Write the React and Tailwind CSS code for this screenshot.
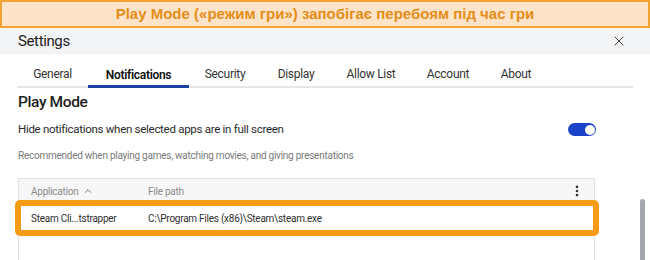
import { X, ChevronUp, EllipsisVertical } from "lucide-react";

const tabs = [
  { label: "General", w: "w-[71px]" },
  { label: "Notifications", w: "w-[101px]", active: true },
  { label: "Security", w: "w-[72px]" },
  { label: "Display", w: "w-[70px]" },
  { label: "Allow List", w: "w-[80px]" },
  { label: "Account", w: "w-[74px]" },
  { label: "About", w: "w-[62px]" },
];

const Toggle = () => (
  <div className="w-[28px] h-[13px] rounded-full bg-[#1b43c9] flex items-center justify-end pr-[1.5px]">
    <div className="w-[10px] h-[10px] rounded-full bg-white" />
  </div>
);

export default function App() {
  return (
    <div className="w-[650px] h-[260px] bg-white overflow-hidden relative font-['Roboto',sans-serif]">
      <div className="h-[28px] border-2 border-[#f0a232] bg-[#fde4c8] flex items-center justify-center">
        <span className="font-['Liberation_Sans',sans-serif] font-bold text-[15px] text-[#e58d18]">
          Play Mode («режим гри») запобігає перебоям під час гри
        </span>
      </div>

      <div className="h-[26px] bg-[#f3f4f6] flex items-center justify-between pl-[18px] pr-[23px]">
        <span className="text-[15px] text-[#222] tracking-tight">Settings</span>
        <X size={16} strokeWidth={1.4} className="text-[#333]" />
      </div>

      <div className="mx-[17px] mt-[7px] border-b-2 border-[#e6e6e6] flex h-[27px]">
        {tabs.map((t) => (
          <div
            key={t.label}
            className={`${t.w} flex items-center justify-center text-[12px] tracking-tight ${
              t.active
                ? "font-semibold text-[#111] border-b-[3px] border-[#1f3fa6] -mb-[2px] pt-[3px]"
                : "text-[#333]"
            }`}
          >
            {t.label}
          </div>
        ))}
      </div>

      <div className="px-[18px]">
        <div className="mt-[4px] text-[15.5px] font-medium text-[#1d1d1d] tracking-tight leading-[20px]">
          Play Mode
        </div>

        <div className="mt-[9px] flex items-center justify-between pr-[36px]">
          <span className="text-[11.5px] text-[#2a2a2a] tracking-tight">
            Hide notifications when selected apps are in full screen
          </span>
          <Toggle />
        </div>

        <div className="mt-[10px] text-[10px] text-[#7a7a7a] tracking-tight">
          Recommended when playing games, watching movies, and giving presentations
        </div>

        <div className="relative mt-[15px] w-[577px] h-[90px] border border-[#e2e2e2] border-b-0">
          <div className="h-[24px] bg-[#f7f7f8] flex items-center text-[10px] text-[#8a8a8a] tracking-tight">
            <div className="w-[129px] pl-[12px] flex items-center gap-[5px]">
              Application
              <ChevronUp size={10} strokeWidth={2} className="text-[#555]" />
            </div>
            <div className="flex-1">File path</div>
            <EllipsisVertical size={14} strokeWidth={2.5} className="text-[#333] mr-[10px]" />
          </div>
          <div className="h-[31px] flex items-center text-[10px] text-[#2e2e2e] tracking-tight">
            <div className="w-[129px] pl-[12px]">Steam Cli...tstrapper</div>
            <div className="flex-1">C:\Program Files (x86)\Steam\steam.exe</div>
          </div>

          <div className="absolute left-[-4px] top-[21px] w-[584px] h-[36px] border-[6px] border-[#f59b16] rounded-[5px]" />
        </div>
      </div>

      <div className="absolute left-[640px] top-[199px] w-[5px] h-[70px] rounded-full bg-[#a4a7ab]" />
    </div>
  );
}
